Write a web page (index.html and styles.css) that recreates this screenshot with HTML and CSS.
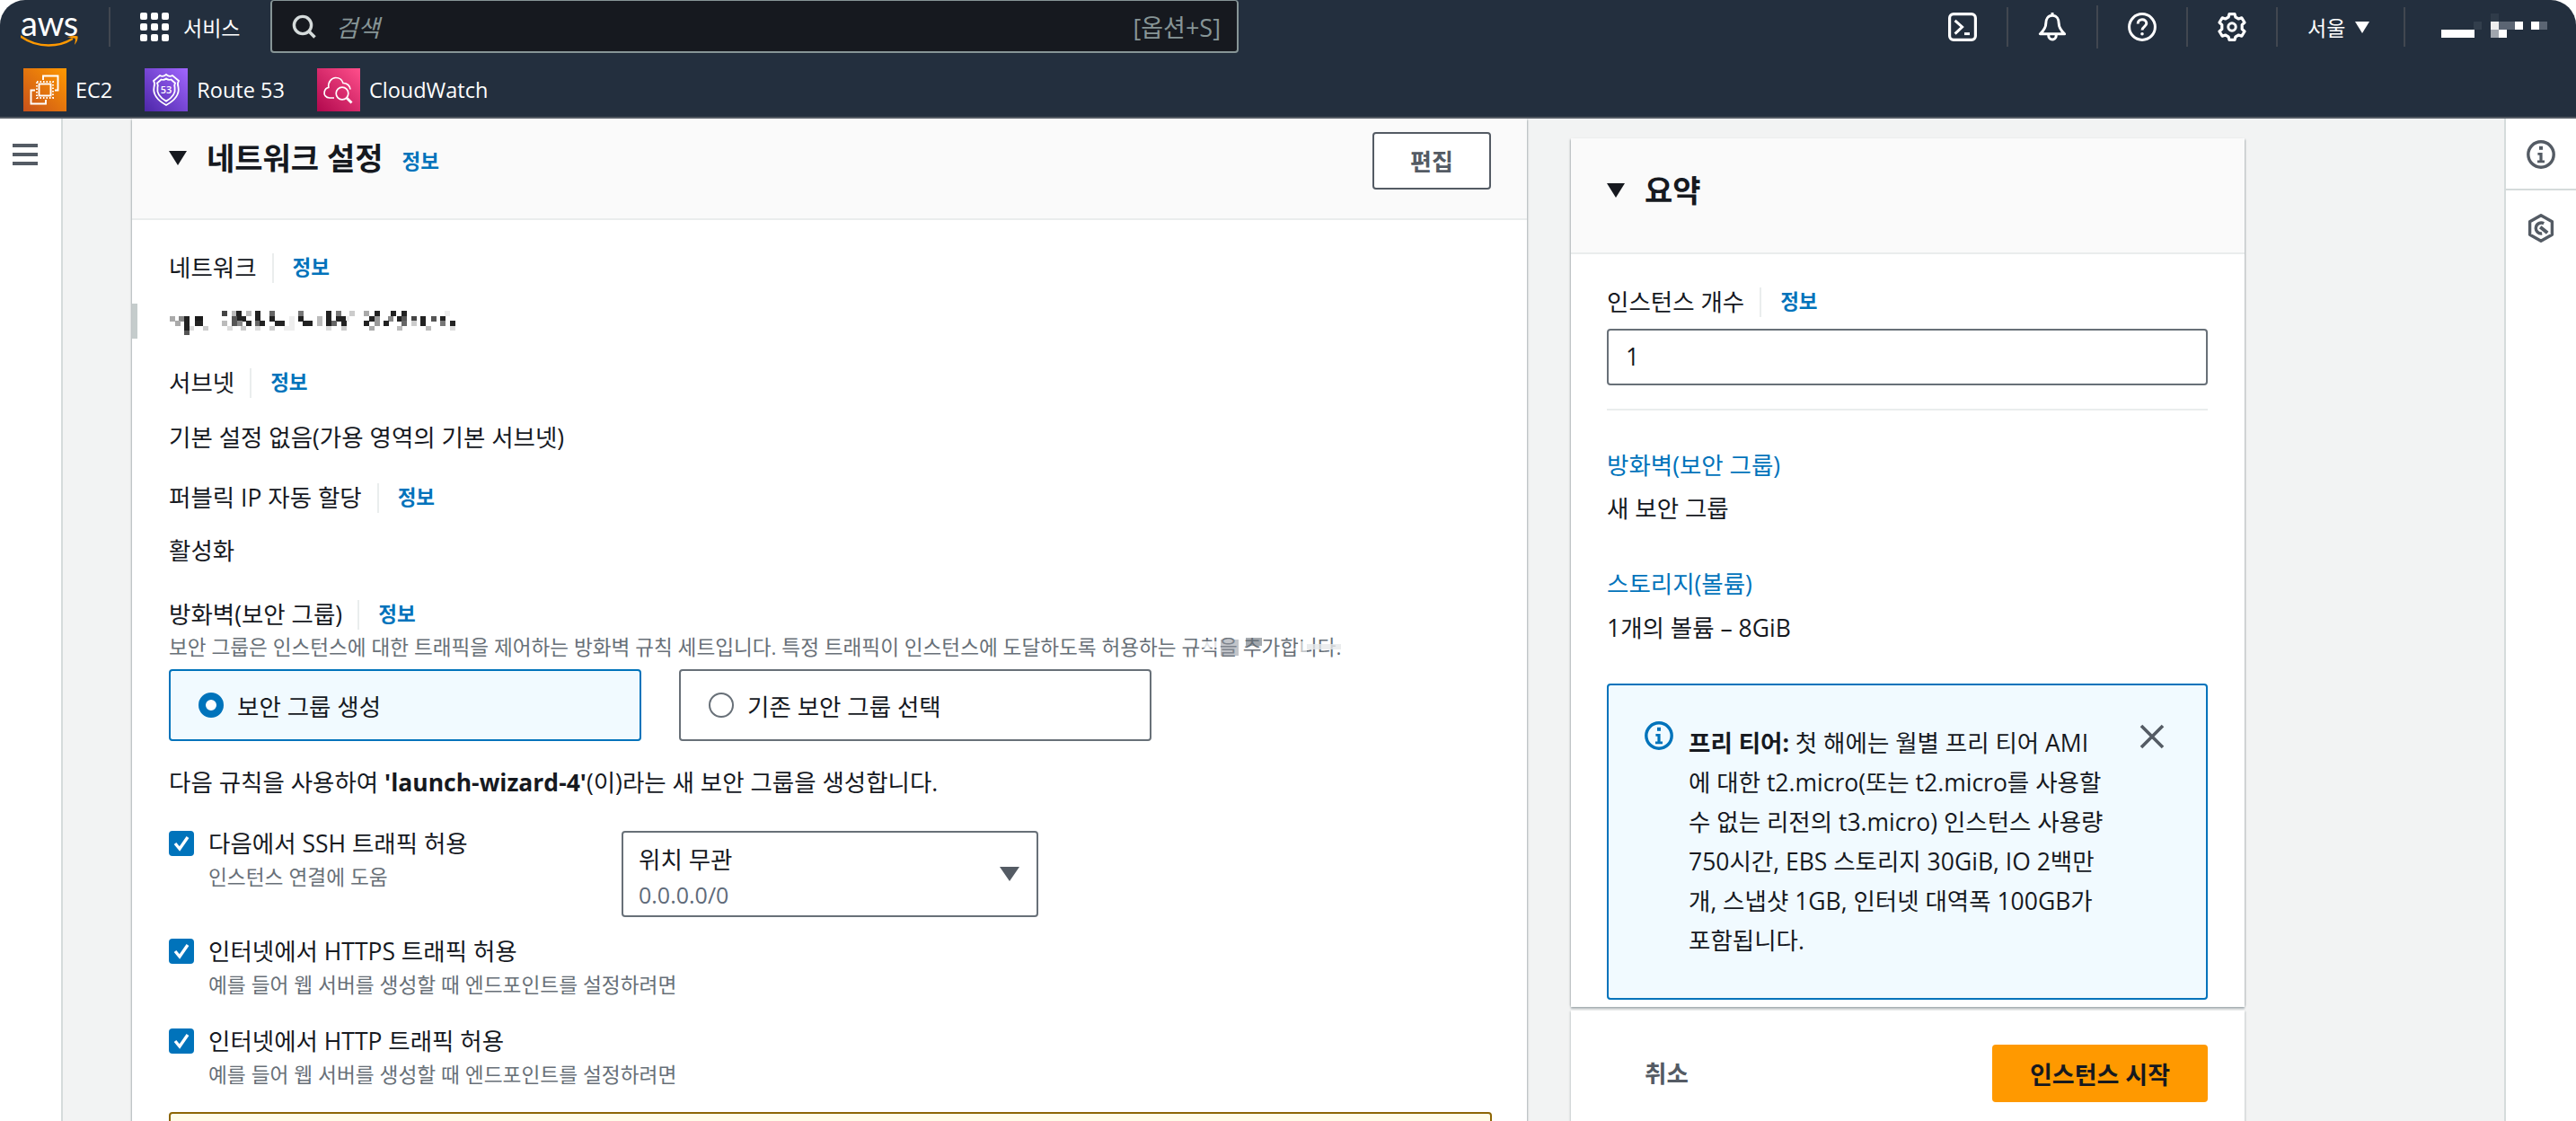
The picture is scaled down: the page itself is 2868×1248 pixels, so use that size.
FILE: index.html
```html
<!DOCTYPE html>
<html lang="ko">
<head>
<meta charset="utf-8">
<title>인스턴스 시작</title>
<link rel="stylesheet" href="styles.css">
</head>
<body>
<div class="app">
  <header class="top">
    <div class="bar">
      <a class="logo">
        <span class="logo-text">aws</span>
        <svg class="logo-smile" viewBox="0 0 64 14" width="64" height="14"><path d="M0 1.5C9 8 20 11.5 31 11.5C41 11.5 50 9 57 4.5" fill="none" stroke="#f90" stroke-width="2.6" stroke-linecap="round"/><path d="M52 2.2C56 1 60 .6 63.6 1.4C63.8 5 62.2 8.6 59.8 11C60.8 8 61.2 5.4 60.6 3.8C58.8 3.2 55.6 3 52 2.2Z" fill="#f90"/></svg>
      </a>
      <span class="sep sep-logo"></span>
      <a class="services">
        <span class="grid-icon"><i></i><i></i><i></i><i></i><i></i><i></i><i></i><i></i><i></i></span>
        <span>서비스</span>
      </a>
      <div class="search">
        <svg class="search-icon" viewBox="0 0 27 27" width="27" height="27"><circle cx="12" cy="12" r="9.6" fill="none" stroke="#d5dbdb" stroke-width="3.4"/><path d="M19 19L25.5 25.5" stroke="#d5dbdb" stroke-width="3.6"/></svg>
        <span class="search-ph">검색</span>
        <span class="search-key">[옵션+S]</span>
      </div>
      <div class="tools">
        <svg class="tool" viewBox="0 0 16 16"><rect x=".8" y=".8" width="14.4" height="14.4" rx="2.2" fill="none" stroke="#fff" stroke-width="1.6"/><path d="M3.8 4.4L7.8 8L3.8 11.8" fill="none" stroke="#fff" stroke-width="1.5"/><path d="M9 11.8H12" stroke="#fff" stroke-width="1.5"/></svg>
        <span class="sep"></span>
        <svg class="tool" viewBox="0 0 16 16"><path d="M8 1.6C5.6 1.6 4.4 3.6 4.4 6C4.4 8.4 3 10.2 1.2 11.9H14.8C13 10.2 11.6 8.4 11.6 6C11.6 3.6 10.4 1.6 8 1.6Z" fill="none" stroke="#fff" stroke-width="1.5" stroke-linejoin="round"/><path d="M8 0V2" stroke="#fff" stroke-width="1.5"/><path d="M5.9 12V13C5.9 15.6 10.1 15.6 10.1 13V12" fill="none" stroke="#fff" stroke-width="1.5"/></svg>
        <span class="sep sep-tall"></span>
        <svg class="tool" viewBox="0 0 16 16"><circle cx="8" cy="8" r="7.2" fill="none" stroke="#fff" stroke-width="1.5"/><path d="M5.6 6.2C5.6 3.2 10.4 3.2 10.4 6C10.4 7.8 8 7.8 8 9.8" fill="none" stroke="#fff" stroke-width="1.5"/><circle cx="8" cy="11.9" r=".9" fill="#fff"/></svg>
        <span class="sep"></span>
        <svg class="tool" viewBox="0 0 16 16"><circle cx="8" cy="8" r="2.1" fill="none" stroke="#fff" stroke-width="1.5"/><path d="M6.5 .8H9.5L10 2.6L11.7 3.5L13.4 2.9L15 5.5L13.6 6.8V9.2L15 10.5L13.4 13.1L11.7 12.5L10 13.4L9.5 15.2H6.5L6 13.4L4.3 12.5L2.6 13.1L1 10.5L2.4 9.2V6.8L1 5.5L2.6 2.9L4.3 3.5L6 2.6Z" fill="none" stroke="#fff" stroke-width="1.6" stroke-linejoin="round"/></svg>
        <span class="sep"></span>
        <a class="region"><span>서울</span><i class="tri tri-white"></i></a>
        <span class="sep"></span>
        <svg class="account" viewBox="0 0 120 36" width="120" height="36"><g shape-rendering="crispEdges"><rect x="36" y="9" width="9" height="9" fill="#323e4c"/><rect x="0" y="18" width="37" height="9" fill="#fff"/><rect x="55" y="0" width="9" height="9" fill="#2f3b49"/><rect x="55" y="9" width="9" height="9" fill="#eee"/><rect x="64" y="9" width="18" height="9" fill="#5b6573"/><rect x="82" y="9" width="9" height="9" fill="#fff"/><rect x="100" y="9" width="9" height="9" fill="#fff"/><rect x="109" y="9" width="9" height="9" fill="#5b6573"/><rect x="55" y="18" width="9" height="9" fill="#a0a6ae"/><rect x="64" y="18" width="9" height="9" fill="#fff"/></g></svg>
      </div>
    </div>
    <div class="fav">
      <a class="fav-item">
        <svg class="fav-icon" viewBox="0 0 48 48"><defs><linearGradient id="g1" x1="0" y1="1" x2="1" y2="0"><stop offset="0" stop-color="#c8511b"/><stop offset="1" stop-color="#f90"/></linearGradient></defs><rect width="48" height="48" fill="url(#g1)"/><g fill="none" stroke="#fff" stroke-width="1.9"><path d="M22 13V8.5H38.5V24.5H35"/><path d="M13 24.5H8.5V39.5H25V35"/><rect x="17.5" y="17.5" width="13" height="13"/><rect x="15" y="15" width="18" height="18" stroke-dasharray="1.6 1.9"/></g></svg>
        <span>EC2</span>
      </a>
      <a class="fav-item">
        <svg class="fav-icon" viewBox="0 0 48 48"><defs><linearGradient id="g2" x1="0" y1="1" x2="1" y2="0"><stop offset="0" stop-color="#4d27a8"/><stop offset="1" stop-color="#a166ff"/></linearGradient></defs><rect width="48" height="48" fill="url(#g2)"/><g fill="none" stroke="#fff" stroke-width="1.8"><path d="M17 8Q20.5 10 24 7Q27.5 10 31 8L38 14Q36 17 37.5 21C39 29 33 36 24 41C15 36 9 29 10.5 21Q12 17 10 14Z"/><path d="M18.5 12.5Q21.5 13.5 24 11.5Q26.5 13.5 29.5 12.5L34 16.5Q32.8 18.5 33.6 21.5C34.6 27.5 30.5 33 24 36.6C17.5 33 13.4 27.5 14.4 21.5Q15.2 18.5 14 16.5Z"/></g><text class="r53" x="24" y="28">53</text></svg>
        <span>Route 53</span>
      </a>
      <a class="fav-item">
        <svg class="fav-icon" viewBox="0 0 48 48"><defs><linearGradient id="g3" x1="0" y1="1" x2="1" y2="0"><stop offset="0" stop-color="#b0084d"/><stop offset="1" stop-color="#ff4f8b"/></linearGradient></defs><rect width="48" height="48" fill="url(#g3)"/><g fill="none" stroke="#fff" stroke-width="1.7"><path d="M19 33H14C9.5 33 7.5 29.5 8.2 26.2C8.8 23.4 10.8 21.8 12.8 21.4C12 15.5 16 10.5 20.8 10.5C25 10.5 28 13.2 29 16.5C33.5 16.5 36.8 19.5 37 23.5"/><circle cx="28" cy="28" r="6.8"/><path d="M33 33L38.5 38.5" stroke-width="2.8"/></g></svg>
        <span>CloudWatch</span>
      </a>
    </div>
  </header>

  <div class="shell">
    <nav class="nav">
      <span class="burger"><i></i><i></i><i></i></span>
    </nav>

    <main class="content">
      <section class="card card-net">
        <div class="head">
          <div class="head-title">
            <i class="tri tri-dark"></i>
            <h2>네트워크 설정</h2>
            <a class="info head-info">정보</a>
          </div>
          <button class="btn-edit">편집</button>
        </div>
        <div class="net-body">
          <div class="label m35"><span>네트워크</span><i class="label-sep"></i><a class="info">정보</a></div>
          <div class="marked">
            <svg class="mosaic" viewBox="0 0 330 40" width="330" height="40"><g shape-rendering="crispEdges"><rect x="62" y="8" width="6" height="6" fill="#444"/><rect x="73" y="8" width="6" height="6" fill="#bbb"/><rect x="78" y="8" width="6" height="6" fill="#222"/><rect x="89" y="8" width="6" height="6" fill="#bbb"/><rect x="99" y="8" width="6" height="6" fill="#222"/><rect x="115" y="8" width="6" height="6" fill="#666"/><rect x="147" y="8" width="6" height="6" fill="#777"/><rect x="178" y="8" width="6" height="6" fill="#222"/><rect x="189" y="8" width="6" height="6" fill="#777"/><rect x="204" y="8" width="6" height="6" fill="#ccc"/><rect x="220" y="8" width="6" height="6" fill="#aaa"/><rect x="232" y="8" width="6" height="6" fill="#222"/><rect x="250" y="8" width="6" height="6" fill="#222"/><rect x="262" y="8" width="6" height="6" fill="#222"/><rect x="310" y="8" width="6" height="6" fill="#eee"/><rect x="4" y="14" width="6" height="6" fill="#aaa"/><rect x="14" y="14" width="6" height="6" fill="#888"/><rect x="20" y="14" width="6" height="6" fill="#222"/><rect x="32" y="14" width="9" height="6" fill="#1a1a1a"/><rect x="73" y="14" width="6" height="6" fill="#555"/><rect x="79" y="14" width="10" height="6" fill="#222"/><rect x="99" y="14" width="6" height="6" fill="#222"/><rect x="115" y="14" width="6" height="6" fill="#222"/><rect x="137" y="14" width="6" height="6" fill="#eee"/><rect x="147" y="14" width="6" height="6" fill="#222"/><rect x="168" y="14" width="6" height="6" fill="#bbb"/><rect x="178" y="14" width="6" height="6" fill="#222"/><rect x="189" y="14" width="11" height="6" fill="#222"/><rect x="200" y="14" width="4" height="6" fill="#eee"/><rect x="226" y="14" width="6" height="6" fill="#222"/><rect x="232" y="14" width="6" height="6" fill="#999"/><rect x="247" y="14" width="6" height="6" fill="#888"/><rect x="257" y="14" width="6" height="6" fill="#222"/><rect x="262" y="14" width="6" height="6" fill="#555"/><rect x="273" y="14" width="6" height="6" fill="#444"/><rect x="283" y="14" width="6" height="6" fill="#222"/><rect x="295" y="14" width="6" height="6" fill="#555"/><rect x="305" y="14" width="6" height="6" fill="#222"/><rect x="10" y="19" width="6" height="6" fill="#aaa"/><rect x="20" y="19" width="6" height="6" fill="#222"/><rect x="32" y="19" width="9" height="6" fill="#222"/><rect x="62" y="19" width="6" height="6" fill="#bbb"/><rect x="73" y="19" width="6" height="6" fill="#555"/><rect x="79" y="19" width="6" height="6" fill="#888"/><rect x="89" y="19" width="6" height="6" fill="#222"/><rect x="99" y="19" width="6" height="6" fill="#666"/><rect x="104" y="19" width="6" height="6" fill="#222"/><rect x="121" y="19" width="11" height="6" fill="#222"/><rect x="137" y="19" width="6" height="6" fill="#eee"/><rect x="152" y="19" width="11" height="6" fill="#222"/><rect x="168" y="19" width="6" height="6" fill="#bbb"/><rect x="178" y="19" width="6" height="6" fill="#222"/><rect x="184" y="19" width="6" height="6" fill="#666"/><rect x="195" y="19" width="6" height="6" fill="#222"/><rect x="220" y="19" width="6" height="6" fill="#222"/><rect x="232" y="19" width="6" height="6" fill="#999"/><rect x="242" y="19" width="6" height="6" fill="#222"/><rect x="262" y="19" width="6" height="6" fill="#666"/><rect x="273" y="19" width="6" height="6" fill="#ccc"/><rect x="283" y="19" width="6" height="6" fill="#222"/><rect x="305" y="19" width="6" height="6" fill="#777"/><rect x="316" y="19" width="6" height="6" fill="#222"/><rect x="20" y="25" width="6" height="5" fill="#222"/><rect x="26" y="25" width="5" height="5" fill="#ddd"/><rect x="41" y="25" width="6" height="5" fill="#ccc"/><rect x="68" y="25" width="6" height="5" fill="#ddd"/><rect x="83" y="25" width="6" height="5" fill="#ccc"/><rect x="99" y="25" width="6" height="5" fill="#ddd"/><rect x="115" y="25" width="6" height="5" fill="#ccc"/><rect x="131" y="25" width="12" height="5" fill="#eee"/><rect x="178" y="25" width="6" height="5" fill="#ddd"/><rect x="195" y="25" width="6" height="5" fill="#ccc"/><rect x="226" y="25" width="6" height="5" fill="#aaa"/><rect x="257" y="25" width="6" height="5" fill="#bbb"/><rect x="289" y="25" width="6" height="5" fill="#bbb"/><rect x="316" y="25" width="6" height="5" fill="#ddd"/><rect x="20" y="30" width="6" height="5" fill="#555"/></g></svg>
          </div>
          <div class="label m31"><span>서브넷</span><i class="label-sep"></i><a class="info">정보</a></div>
          <div class="value m25">기본 설정 없음(가용 영역의 기본 서브넷)</div>
          <div class="label m31"><span>퍼블릭 IP 자동 할당</span><i class="label-sep"></i><a class="info">정보</a></div>
          <div class="value m23">활성화</div>
          <div class="label m35"><span>방화벽(보안 그룹)</span><i class="label-sep"></i><a class="info">정보</a></div>
          <p class="desc">보안 그룹은 인스턴스에 대한 트래픽을 제어하는 방화벽 규칙 세트입니다. 특정 트래픽이 인스턴스에 도달하도록 허용하는 <span class="masked">규칙을 추가합니다.<svg class="mask" viewBox="0 0 200 30" width="200" height="30" preserveAspectRatio="none"><g shape-rendering="crispEdges"><rect x="22" y="8" width="22" height="7" fill="#fff" opacity=".8"/><rect x="44" y="6" width="20" height="18" fill="#8f969e" opacity=".55"/><rect x="72" y="4" width="18" height="9" fill="#687078" opacity=".6"/><rect x="130" y="8" width="10" height="12" fill="#fff" opacity=".6"/><rect x="140" y="11" width="38" height="6" fill="#e6e8ea" opacity=".8"/></g></svg></span></p>
          <div class="radios">
            <label class="radio-card radio-card-on"><i class="radio radio-on"></i><span>보안 그룹 생성</span></label>
            <label class="radio-card"><i class="radio"></i><span>기존 보안 그룹 선택</span></label>
          </div>
          <div class="value m28">다음 규칙을 사용하여 <b>'launch-wizard-4'</b>(이)라는 새 보안 그룹을 생성합니다.</div>
          <div class="rule rule-first">
            <div class="check-wrap">
              <i class="check"><svg viewBox="0 0 28 28" width="28" height="28"><path d="M7 14L12 20L21 7" fill="none" stroke="#fff" stroke-width="3.4"/></svg></i>
              <div><div class="check-label">다음에서 SSH 트래픽 허용</div><div class="check-sub">인스턴스 연결에 도움</div></div>
            </div>
            <div class="select">
              <div><div class="select-main">위치 무관</div><div class="select-sub">0.0.0.0/0</div></div>
              <i class="tri tri-grey"></i>
            </div>
          </div>
          <div class="rule rule-mid">
            <div class="check-wrap">
              <i class="check"><svg viewBox="0 0 28 28" width="28" height="28"><path d="M7 14L12 20L21 7" fill="none" stroke="#fff" stroke-width="3.4"/></svg></i>
              <div><div class="check-label">인터넷에서 HTTPS 트래픽 허용</div><div class="check-sub">예를 들어 웹 서버를 생성할 때 엔드포인트를 설정하려면</div></div>
            </div>
          </div>
          <div class="rule rule-last">
            <div class="check-wrap">
              <i class="check"><svg viewBox="0 0 28 28" width="28" height="28"><path d="M7 14L12 20L21 7" fill="none" stroke="#fff" stroke-width="3.4"/></svg></i>
              <div><div class="check-label">인터넷에서 HTTP 트래픽 허용</div><div class="check-sub">예를 들어 웹 서버를 생성할 때 엔드포인트를 설정하려면</div></div>
            </div>
          </div>
          <div class="warning"></div>
        </div>
      </section>

      <aside class="side">
        <section class="card card-sum">
          <div class="sum-head"><i class="tri tri-dark"></i><h2>요약</h2></div>
          <div class="sum-body">
            <div class="label"><span>인스턴스 개수</span><i class="label-sep"></i><a class="info">정보</a></div>
            <div class="input">1</div>
            <hr class="rule-line">
            <a class="sum-link m43">방화벽(보안 그룹)</a>
            <div class="value m12">새 보안 그룹</div>
            <a class="sum-link m48">스토리지(볼륨)</a>
            <div class="value m13">1개의 볼륨 – 8GiB</div>
            <div class="alert">
              <svg class="alert-icon" viewBox="0 0 16 16" width="32" height="32"><circle cx="8" cy="8" r="7.1" fill="none" stroke="#0073bb" stroke-width="1.7"/><rect x="7" y="3.4" width="2" height="2" fill="#0073bb"/><path d="M6.2 7H8.8V11.2H10V12.6H6V11.2H7.2V8.4H6.2Z" fill="#0073bb"/></svg>
              <p class="alert-text"><b>프리 티어:</b> 첫 해에는 월별 프리 티어 AMI<br>에 대한 t2.micro(또는 t2.micro를 사용할<br>수 없는 리전의 t3.micro) 인스턴스 사용량<br>750시간, EBS 스토리지 30GiB, IO 2백만<br>개, 스냅샷 1GB, 인터넷 대역폭 100GB가<br>포함됩니다.</p>
              <svg class="alert-close" viewBox="0 0 28 28" width="28" height="28"><path d="M2 2L26 26M26 2L2 26" stroke="#545b64" stroke-width="3.6"/></svg>
            </div>
          </div>
        </section>
        <div class="sum-foot">
          <a class="cancel">취소</a>
          <button class="btn-launch">인스턴스 시작</button>
        </div>
      </aside>
    </main>

    <aside class="rail">
      <div class="rail-item">
        <svg viewBox="0 0 16 16" width="32" height="32"><circle cx="8" cy="8" r="7.1" fill="none" stroke="#545b64" stroke-width="1.7"/><rect x="7" y="3.4" width="2" height="2" fill="#545b64"/><path d="M6.2 7H8.8V11.2H10V12.6H6V11.2H7.2V8.4H6.2Z" fill="#545b64"/></svg>
      </div>
      <div class="rail-item rail-item-last">
        <svg viewBox="0 0 16 16" width="32" height="32"><path d="M8 .9L14.2 4.4V11.6L8 15.1L1.8 11.6V4.4Z" fill="none" stroke="#545b64" stroke-width="1.7" stroke-linejoin="round"/><path d="M9.6 5.4A3 3 0 1 0 8.6 11" fill="none" stroke="#545b64" stroke-width="1.7"/><path d="M7.6 7.4L11.6 10.6" stroke="#545b64" stroke-width="2"/></svg>
      </div>
    </aside>
  </div>
</div>
</body>
</html>
```

FILE: styles.css
```css
* { box-sizing: border-box; }
html, body { margin: 0; height: 100%; background: #fff; overflow: hidden; }
body { font-family: "Open Sans", "Noto Sans CJK KR", sans-serif; font-size: 26.5px; color: #16191f; }
i { display: block; font-style: normal; }
a { display: block; }
p, h2 { margin: 0; }

.app { width: 2868px; height: 1248px; display: flex; flex-direction: column; overflow: hidden; }

/* header */
.top { height: 132px; flex: none; background: #232f3e; border-bottom: 2px solid #545b64; border-radius: 28px 28px 0 0; color: #fff; }
.bar { height: 60px; display: flex; align-items: center; }
.logo { width: 64px; margin-left: 23px; height: 44px; display: flex; flex-direction: column; align-items: center; margin-top: 8px; }
.logo-text { font-family: "Lato", sans-serif; font-size: 38px; line-height: 26px; height: 26px; font-weight: 400; letter-spacing: -.3px; }
.logo-smile { display: block; flex: none; margin-top: 1px; }
.sep { display: block; width: 2px; height: 44px; background: #414750; flex: none; }
.sep-tall { height: 48px; }
.sep-logo { margin-left: 34px; }
.services { display: flex; align-items: center; gap: 16px; margin-left: 33px; font-size: 23px; width: 145px; }
.grid-icon { display: grid; grid-template-columns: repeat(3, 8px); grid-auto-rows: 8px; gap: 4px; }
.grid-icon i { background: #fff; border-radius: 2px; }
.search { width: 1078px; height: 59px; align-self: flex-start; background: #16191f; border: 2px solid #879596; border-top-width: 1px; border-radius: 4px; display: flex; align-items: center; padding: 0 18px 0 22px; }
.search-icon { flex: none; }
.search-ph { font-style: italic; color: #879596; margin-left: 22px; font-size: 26.5px; }
.search-key { margin-left: auto; color: #879596; font-size: 27px; }
.tools { display: flex; align-items: center; gap: 33px; margin-left: 790px; }
.tool { width: 32px; height: 32px; flex: none; }
.region { display: flex; align-items: center; gap: 11px; font-size: 23px; width: 74px; }
.account { flex: none; margin: 6px 0 0 7px; }

.tri { width: 0; height: 0; flex: none; border-style: solid; border-color: transparent; border-width: 16px 10px 0; }
.tri-white { border-width: 13px 8px 0; border-top-color: #fff; }
.tri-dark { border-top-color: #16191f; }
.tri-grey { border-width: 16px 11px 0; border-top-color: #545b64; }

.fav { height: 70px; display: flex; align-items: flex-start; padding: 16px 0 0 26px; gap: 36px; font-size: 23.5px; }
.fav-item { display: flex; align-items: center; gap: 10px; height: 48px; }
.fav-icon { width: 48px; height: 48px; display: block; flex: none; }
.r53 { font-family: "Open Sans", sans-serif; font-size: 11px; fill: #fff; text-anchor: middle; font-weight: 600; }

/* frame */
.shell { flex: 1; min-height: 0; display: flex; overflow: hidden; }
.nav { width: 70px; flex: none; background: #fff; border-right: 2px solid #d5dbdb; padding: 28px 0 0 14px; }
.burger { display: flex; flex-direction: column; gap: 6px; width: 28px; }
.burger i { height: 4px; background: #545b64; }
.content { flex: 1; min-width: 0; background: #f2f3f3; display: flex; align-items: flex-start; padding-left: 77px; }
.rail { width: 80px; flex: none; background: #fff; border-left: 2px solid #d5dbdb; }
.rail-item { height: 80px; border-bottom: 2px solid #d5dbdb; display: flex; justify-content: center; padding-top: 24px; }
.rail-item-last { border-bottom: 0; padding-top: 26px; }

/* cards */
.card { background: #fff; box-shadow: 0 2px 2px rgba(0, 28, 36, .3), 2px 0 2px -1px rgba(0, 28, 36, .18), -2px 0 2px -1px rgba(0, 28, 36, .18); }
.card-net { width: 1553px; flex: none; }
.head { height: 113px; background: #fafafa; border-bottom: 2px solid #eaeded; display: flex; align-items: flex-start; padding: 15px 40px 0 41px; }
.head-title { display: flex; align-items: center; height: 48px; margin-top: 5px; }
h2 { font-size: 34px; font-weight: 700; line-height: 48px; margin-left: 22px; }
.head-info { margin: 8px 0 0 21px; }
.btn-edit { margin-left: auto; width: 132px; height: 64px; background: #fff; border: 2px solid #545b64; border-radius: 4px; color: #545b64; font: 700 26px "Open Sans", "Noto Sans CJK KR", sans-serif; padding: 0; }

.net-body { padding: 0 39px 0 41px; }
.label { display: flex; align-items: center; height: 36px; line-height: 36px; }
.label-sep { width: 2px; height: 33px; background: #eaeded; margin: 0 21px 0 17px; }
.info { color: #0073bb; font-size: 22.5px; font-weight: 700; line-height: 36px; }
.value { height: 36px; line-height: 36px; white-space: nowrap; }
.m12 { margin-top: 12px; } .m13 { margin-top: 13px; } .m23 { margin-top: 23px; } .m25 { margin-top: 25px; }
.m28 { margin-top: 28px; } .m31 { margin-top: 31px; } .m35 { margin-top: 35px; } .m43 { margin-top: 43px; } .m48 { margin-top: 48px; }

.marked { height: 39px; margin: 22px 0 0 -41px; padding-left: 32px; border-left: 6px solid #c5cccc; }
.mosaic { display: block; margin-top: 2px; }

.desc { margin-top: 4px; height: 30px; line-height: 30px; font-size: 22.6px; color: #687078; white-space: nowrap; }
.masked { position: relative; display: inline-block; }
.mask { position: absolute; left: 0; top: 0; }

.radios { display: flex; gap: 42px; margin-top: 9px; }
.radio-card { width: 526px; height: 80px; border: 2px solid #687078; border-radius: 4px; display: flex; align-items: center; gap: 15px; padding-left: 31px; background: #fff; }
.radio-card-on { border-color: #0073bb; background: #f1faff; }
.radio { width: 28px; height: 28px; border-radius: 50%; border: 2px solid #687078; background: #fff; }
.radio-on { border: 8px solid #0073bb; }

.rule { display: grid; grid-template-columns: 504px 464px; }
.rule-first { margin-top: 36px; }
.rule-mid { margin-top: 24px; }
.rule-last { margin-top: 33px; }
.check-wrap { display: flex; gap: 16px; }
.check { width: 28px; height: 28px; flex: none; background: #0073bb; border-radius: 4px; }
.check svg { display: block; }
.check-label { line-height: 28px; height: 28px; white-space: nowrap; }
.check-sub { margin-top: 9px; line-height: 30px; font-size: 22.7px; color: #687078; white-space: nowrap; }
.select { height: 96px; border: 2px solid #687078; border-radius: 4px; padding: 12px 19px 0 17px; display: flex; justify-content: space-between; align-items: center; }
.select > div { align-self: flex-start; }
.select-main { line-height: 36px; }
.select-sub { line-height: 36px; margin-top: 3px; font-size: 25px; color: #5f6b7a; }
.select .tri { margin-top: -12px; }

.warning { margin-top: 26px; height: 100px; border: 2px solid #8d6605; border-radius: 4px; background: #fffce9; }

/* summary */
.side { width: 750px; flex: none; margin: 22px 0 0 49px; display: flex; flex-direction: column; gap: 4px; }
.sum-head { height: 129px; background: #fafafa; border-bottom: 2px solid #eaeded; display: flex; align-items: center; padding: 0 0 12px 40px; }
.sum-body { padding: 35px 41px 8px 40px; }
.input { margin-top: 12px; height: 63px; border: 2px solid #687078; border-radius: 4px; line-height: 59px; padding-left: 19px; }
.rule-line { margin: 26px 0 0; border: 0; height: 2px; background: #eaeded; }
.sum-link { color: #0073bb; height: 36px; line-height: 36px; }
.alert { margin-top: 44px; height: 352px; border: 2px solid #0073bb; border-radius: 4px; background: #f1faff; display: flex; padding: 40px 0 0 40px; }
.alert-icon { display: block; flex: none; }
.alert-text { margin: 2px 0 0 17px; line-height: 44px; white-space: nowrap; flex: none; width: 502px; }
.alert-close { display: block; flex: none; margin: 3px 0 0 0; }
.sum-foot { height: 140px; background: #fff; box-shadow: 2px 0 2px -1px rgba(0, 28, 36, .18), -2px 0 2px -1px rgba(0, 28, 36, .18); display: flex; justify-content: space-between; align-items: flex-start; padding: 38px 41px 0 82px; }
.cancel { color: #545b64; font-weight: 700; line-height: 64px; }
.btn-launch { width: 240px; height: 64px; background: #f90; border: 0; border-radius: 4px; color: #16191f; font: 700 27px "Open Sans", "Noto Sans CJK KR", sans-serif; padding: 0; }
```
